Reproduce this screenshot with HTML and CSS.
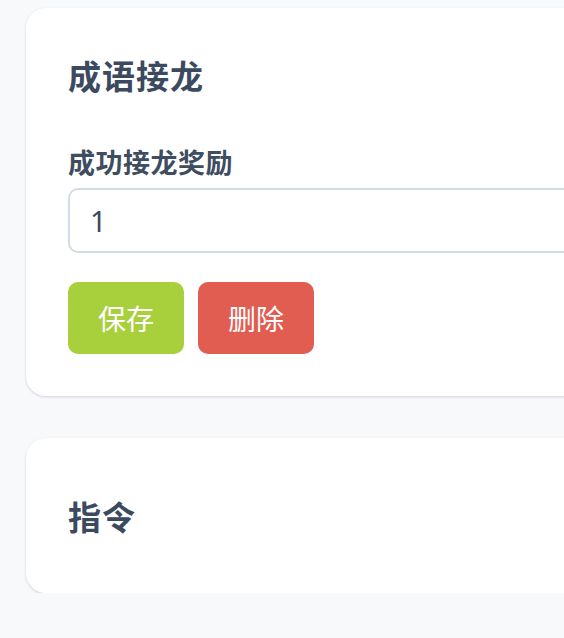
FILE: index.html
```html
<!DOCTYPE html>
<html lang="zh-CN">
<head>
<meta charset="utf-8">
<title>成语接龙</title>
<link rel="stylesheet" href="styles.css">
</head>
<body>
<main class="page">
  <section class="card card-form">
    <h2 class="card-title">成语接龙</h2>
    <label class="field-label" for="reward">成功接龙奖励</label>
    <input class="field-input" id="reward" type="text" value="1">
    <div class="actions">
      <button class="btn btn-save" type="button">保存</button>
      <button class="btn btn-delete" type="button">删除</button>
    </div>
  </section>
  <section class="card card-plain">
    <h2 class="card-title">指令</h2>
  </section>
</main>
</body>
</html>
```
FILE: styles.css
```css
html, body {
  margin: 0;
  padding: 0;
  overflow: hidden;
}
body {
  background: #f7f9fb;
  font-family: "Noto Sans CJK SC", "Noto Sans", sans-serif;
  color: #3b4a5f;
}
.page {
  display: flex;
  flex-direction: column;
  gap: 42px;
  padding: 8px 0 0 26px;
  width: 720px;
}
.card {
  background: #ffffff;
  border-radius: 20px;
  box-shadow: 0 1px 3px rgba(30, 41, 59, 0.12), 0 1px 2px rgba(30, 41, 59, 0.06);
  display: flex;
  flex-direction: column;
  padding: 46px 42px 42px;
}
.card-plain {
  padding: 57px 42px 56px;
}
.card-title {
  margin: 0;
  font-size: 33px;
  line-height: 42px;
  font-weight: 700;
  letter-spacing: 1px;
  color: #3b4a5f;
}
.card-form .card-title {
  margin-bottom: 48px;
}
.field-label {
  font-size: 27px;
  line-height: 36px;
  font-weight: 700;
  letter-spacing: 0.5px;
  color: #3f4d60;
}
.field-input {
  margin-top: 8px;
  height: 65px;
  box-sizing: border-box;
  border: 2px solid #d3dbe6;
  border-radius: 10px;
  padding: 0 20px;
  font-family: "Noto Sans", "Noto Sans CJK SC", sans-serif;
  font-size: 29px;
  color: #3b4a5f;
  background: #fff;
  outline: none;
}
.actions {
  display: flex;
  gap: 14px;
  margin-top: 29px;
}
.btn {
  width: 116px;
  height: 72px;
  border: none;
  border-radius: 10px;
  color: #ffffff;
  font-family: "Noto Sans CJK SC", sans-serif;
  font-size: 28px;
  padding: 0;
}
.btn-save {
  background: #a8cf3c;
}
.btn-delete {
  background: #e15d52;
}
```
